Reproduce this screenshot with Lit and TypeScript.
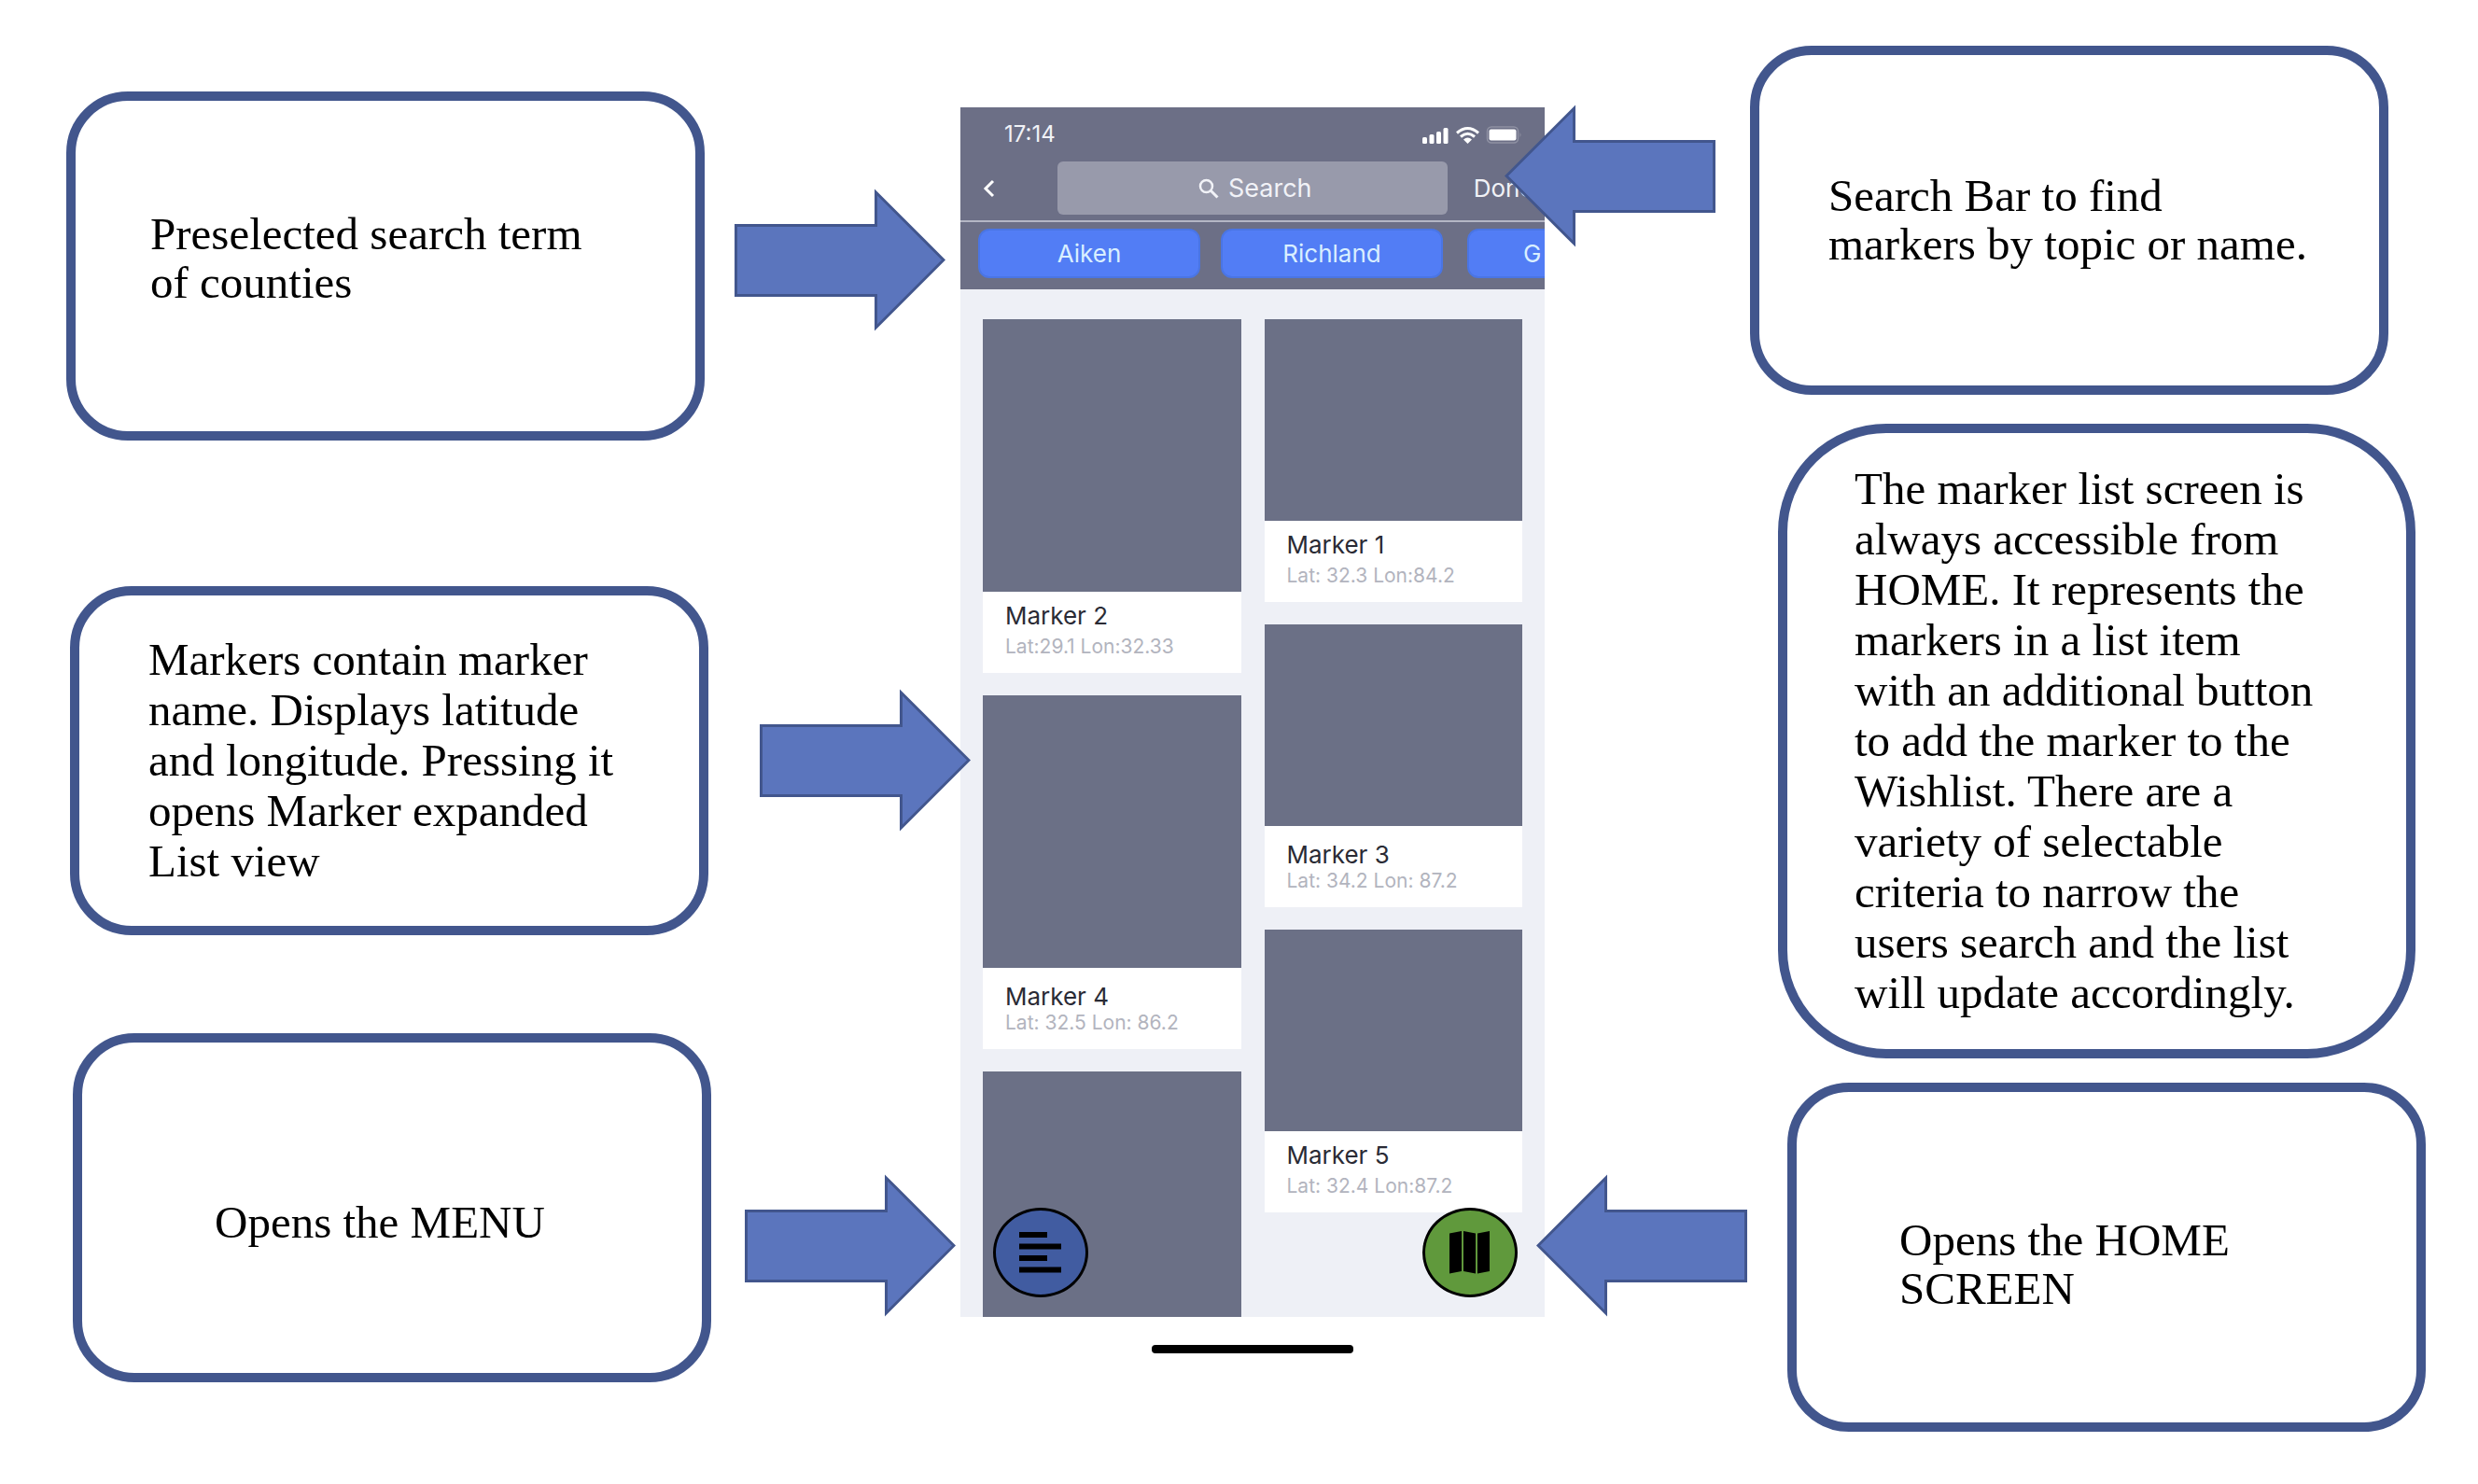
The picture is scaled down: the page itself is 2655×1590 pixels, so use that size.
import { LitElement, html, css, svg, nothing } from "lit";
import { customElement, property } from "lit/decorators.js";
import { classMap } from "lit/directives/class-map.js";

interface Marker {
  name: string;
  position: string;
  close?: boolean;
}

interface Note {
  id: string;
  lines: string[];
  arrow: boolean;
}

const leftNotes: Note[] = [
  { id: "counties", lines: ["Preselected search term", "of counties"], arrow: true },
  {
    id: "markers",
    lines: [
      "Markers contain marker",
      "name. Displays latitude",
      "and longitude. Pressing it",
      "opens Marker expanded",
      "List view",
    ],
    arrow: true,
  },
  { id: "menu", lines: ["Opens the MENU"], arrow: true },
];

const rightNotes: Note[] = [
  { id: "search", lines: ["Search Bar to find", "markers by topic or name."], arrow: true },
  {
    id: "about",
    lines: [
      "The marker list screen is",
      "always accessible from",
      "HOME. It represents the",
      "markers in a list item",
      "with an additional button",
      "to add the marker to the",
      "Wishlist. There are a",
      "variety of selectable",
      "criteria to narrow the",
      "users search and the list",
      "will update accordingly.",
    ],
    arrow: false,
  },
  { id: "home", lines: ["Opens the HOME", "SCREEN"], arrow: true },
];

const leftMarkers: Marker[] = [
  { name: "Marker 2", position: "Lat:29.1 Lon:32.33" },
  { name: "Marker 4", position: "Lat: 32.5 Lon: 86.2", close: true },
];

const rightMarkers: Marker[] = [
  { name: "Marker 1", position: "Lat: 32.3 Lon:84.2" },
  { name: "Marker 3", position: "Lat: 34.2 Lon: 87.2", close: true },
  { name: "Marker 5", position: "Lat: 32.4 Lon:87.2" },
];

const counties = ["Aiken", "Richland"];

/** Block arrow that points from a note to the part of the screen it explains. */
@customElement("block-arrow")
export class BlockArrow extends LitElement {
  @property() direction: "left" | "right" = "right";

  static styles = css`
    :host {
      display: block;
    }
    .shape {
      display: block;
      width: 100%;
      fill: #5b75bd;
      stroke: #42568d;
      stroke-width: 3;
    }
  `;

  render() {
    const outline =
      this.direction === "right"
        ? svg`<path d="M1.500 39.500H151.500V4L224 76.500L151.500 149V114.500H1.500Z"/>`
        : svg`<path d="M224.500 39.500H74.500V4L2 76.500L74.500 149V114.500H224.500Z"/>`;
    return html`<svg class="shape" viewBox="0 0 226 153" aria-hidden="true">${outline}</svg>`;
  }
}

@customElement("marker-screen")
export class MarkerScreen extends LitElement {
  static styles = css`
    :host {
      display: flex;
      flex-direction: column;
      align-items: center;
      font-family: Inter, "Liberation Sans", sans-serif;
      font-size: 26px;
      line-height: 32px;
    }
    button {
      font: inherit;
      color: inherit;
      margin: 0;
      padding: 0;
      border: 0;
      background: none;
      cursor: pointer;
    }
    svg {
      display: block;
    }
    .screen {
      width: 100%;
      overflow: hidden;
      background: #eef0f6;
    }
    .head {
      background: #6c6f86;
      color: #f1f2f7;
    }
    .status {
      display: flex;
      align-items: center;
      justify-content: space-between;
      height: 58px;
      padding: 0 24px 0 47px;
      font-size: 24px;
    }
    .nav {
      display: grid;
      grid-template-columns: 1fr 4fr 1fr;
      height: 57px;
      padding-bottom: 6px;
      border-bottom: 2px solid #b4b6c5;
    }
    .back {
      padding-left: 24px;
    }
    .done {
      padding-left: 28px;
      text-align: left;
    }
    .search {
      display: flex;
      align-items: center;
      justify-content: center;
      gap: 10px;
      padding-left: 8px;
      border-radius: 6px;
      background: #989aab;
      font-size: 27px;
    }
    .query {
      width: 92px;
      padding: 0;
      border: 0;
      outline: 0;
      background: none;
      font: inherit;
      color: inherit;
    }
    .query::placeholder {
      color: #f1f2f7;
      opacity: 1;
    }
    .chips {
      display: flex;
      gap: 22px;
      padding: 7px 0 12px 19px;
      overflow: hidden;
    }
    .chip {
      flex: none;
      width: 238px;
      height: 53px;
      border: 2px solid #4a75e4;
      border-radius: 12px;
      background: #527df5;
      color: #d9efff;
    }
    .partial {
      margin-left: 4px;
      padding-left: 58px;
      text-align: left;
    }
    .list {
      position: relative;
      display: grid;
      grid-template-columns: 1fr 1fr;
      gap: 25px;
      min-height: 1069px;
      padding: 32px 24px 0;
    }
    .column {
      display: flex;
      flex-direction: column;
      gap: 24px;
    }
    .card {
      background: #fff;
    }
    .photo {
      height: 216px;
      background: #6b7086;
    }
    .tall {
      height: 292px;
    }
    .rest {
      flex: 1;
    }
    .caption {
      display: grid;
      height: 87px;
      padding: 10px 24px 16px;
      box-sizing: border-box;
      align-content: space-between;
    }
    .close {
      padding-top: 15px;
    }
    .name {
      margin: 0;
      font-size: 26px;
      font-weight: 400;
      line-height: 32px;
      color: #2a2b35;
    }
    .position {
      margin: 0;
      font-size: 21px;
      line-height: 24px;
      color: #b2b4be;
    }
    .fab {
      position: absolute;
      bottom: 21px;
      display: grid;
      place-items: center;
      width: 102px;
      height: 96px;
      border: 3px solid #000;
      border-radius: 50%;
      color: #000;
    }
    .menu {
      left: 35px;
      background: #415ca1;
    }
    .map {
      right: 29px;
      background: #60993c;
    }
    .indicator {
      width: 216px;
      height: 9px;
      margin-top: 30px;
      border-radius: 4px;
      background: #000;
    }
  `;

  private card(marker: Marker, tall: boolean) {
    return html`
      <article class="card">
        <div class=${classMap({ photo: true, tall })}></div>
        <div class=${classMap({ caption: true, close: !!marker.close })}>
          <h2 class="name">${marker.name}</h2>
          <p class="position">${marker.position}</p>
        </div>
      </article>
    `;
  }

  render() {
    return html`
      <section class="screen">
        <header class="head">
          <div class="status">
            <span>17:14</span>
            <svg width="107" height="20" viewBox="0 0 107 20" fill="#fff" aria-hidden="true">
              <rect x="0" y="13" width="5" height="7" rx="1.500" />
              <rect x="7.500" y="10" width="5" height="10" rx="1.500" />
              <rect x="15" y="7" width="5" height="13" rx="1.500" />
              <rect x="22.500" y="3" width="5" height="17" rx="1.500" />
              <g fill="none" stroke="#fff" stroke-width="3">
                <path d="M37 8.500Q48.500 -1.500 60 8.500" />
                <path d="M41 12.500Q48.500 6 56 12.500" />
              </g>
              <path d="M44 15.500Q48.500 11.500 53 15.500L48.500 20Z" />
              <rect x="69.500" y="2" width="33" height="17" rx="4.500" fill="none" stroke="#8f91a3" stroke-width="1.500" />
              <rect x="71.500" y="4.500" width="29" height="12" rx="2" />
              <path d="M104.500 8q2 2.500 0 5z" fill="#8f91a3" />
            </svg>
          </div>
          <nav class="nav">
            <button class="back" aria-label="Back">
              <svg width="14" height="20" viewBox="0 0 14 20" fill="none" stroke="#fff" stroke-width="3" aria-hidden="true">
                <path d="M11 2L3 10L11 18" />
              </svg>
            </button>
            <label class="search">
              <svg width="22" height="22" viewBox="0 0 22 22" fill="none" stroke="#f1f2f7" aria-hidden="true">
                <circle cx="8.500" cy="8.500" r="6.500" stroke-width="2.500" />
                <path d="M13.500 13.500L20.500 20.500" stroke-width="3" />
              </svg>
              <input class="query" type="text" placeholder="Search" aria-label="Search" />
            </label>
            <button class="done">Done</button>
          </nav>
          <div class="chips">
            ${counties.map((county) => html`<button class="chip">${county}</button>`)}
            <button class="chip partial">G</button>
          </div>
        </header>
        <div class="list">
          <div class="column">
            ${leftMarkers.map((marker) => this.card(marker, true))}
            <div class="photo rest"></div>
          </div>
          <div class="column">${rightMarkers.map((marker) => this.card(marker, false))}</div>
          <button class="fab menu" aria-label="Menu">
            <svg width="46" height="44" viewBox="0 0 46 44" aria-hidden="true">
              <path d="M0 0H30V6H0ZM0 12.500H45V18.500H0ZM0 25H30V31H0ZM0 37.500H45V43.500H0Z" />
            </svg>
          </button>
          <button class="fab map" aria-label="Home">
            <svg width="44" height="46" viewBox="0 0 44 46" aria-hidden="true">
              <path d="M0 2.500L13 0V43L0 45.500ZM15 0L28 2.500V45.500L15 43ZM30 2.500L43 0V43L30 45.500Z" />
            </svg>
          </button>
        </div>
      </section>
      <div class="indicator"></div>
    `;
  }
}

@customElement("app-root")
export class AppRoot extends LitElement {
  static styles = css`
    :host {
      display: block;
      min-height: 100vh;
      overflow: hidden;
      background: #fff;
      font-family: Georgia, "Liberation Serif", serif;
      font-size: 49px;
      line-height: 52px;
      color: #000;
    }
    .page {
      display: grid;
      grid-template-columns: 1029fr 626fr 1000fr;
      align-items: start;
    }
    .phone {
      min-width: 0;
      margin-top: 115px;
    }
    .notes {
      position: relative;
      z-index: 1;
      min-width: 0;
      display: flex;
      flex-direction: column;
    }
    .row {
      display: flex;
      align-items: flex-start;
    }
    .pointer {
      flex: none;
      width: 226px;
    }
    .note {
      flex: 1;
      box-sizing: border-box;
      display: flex;
      align-items: center;
      min-height: 374px;
      padding: 32px 20px 32px 74px;
      border: 10px solid #42568d;
      border-radius: 66px;
      background: #fff;
    }
    .text {
      margin: 0;
      white-space: pre;
    }
    .counties {
      gap: 32px;
      margin: 98px 16px 0 71px;
    }
    .counties .note {
      padding: 24px 20px 40px 80px;
    }
    .counties .pointer {
      margin-top: 104px;
    }
    .markers {
      gap: 55px;
      margin: 156px -11px 0 75px;
    }
    .markers .pointer {
      margin-top: 110px;
    }
    .markers,
    .about {
      line-height: 54px;
    }
    .menu {
      gap: 36px;
      margin: 105px 5px 0 78px;
    }
    .menu .note {
      padding: 48px 20px 16px 142px;
    }
    .menu .pointer {
      margin-top: 151px;
    }
    .search {
      gap: 37px;
      margin: 49px 96px 0 -43px;
    }
    .search .pointer {
      margin-top: 63px;
    }
    .about {
      margin: 31px 67px 0 250px;
    }
    .about .note {
      border-radius: 116px;
      min-height: 680px;
      padding-left: 72px;
    }
    .home {
      gap: 43px;
      margin: 26px 56px 0 -9px;
    }
    .home .note {
      padding: 40px 20px 24px 110px;
    }
    .home .pointer {
      margin-top: 98px;
    }
  `;

  private note(note: Note, side: "left" | "right") {
    const box = html`<div class="note"><p class="text">${note.lines.join("\n")}</p></div>`;
    const arrow = note.arrow
      ? html`<block-arrow class="pointer" direction=${side === "left" ? "right" : "left"}></block-arrow>`
      : nothing;
    return html`<div class="row ${note.id}">${side === "left" ? [box, arrow] : [arrow, box]}</div>`;
  }

  render() {
    return html`
      <main class="page">
        <div class="notes">${leftNotes.map((note) => this.note(note, "left"))}</div>
        <marker-screen class="phone"></marker-screen>
        <div class="notes">${rightNotes.map((note) => this.note(note, "right"))}</div>
      </main>
    `;
  }
}
